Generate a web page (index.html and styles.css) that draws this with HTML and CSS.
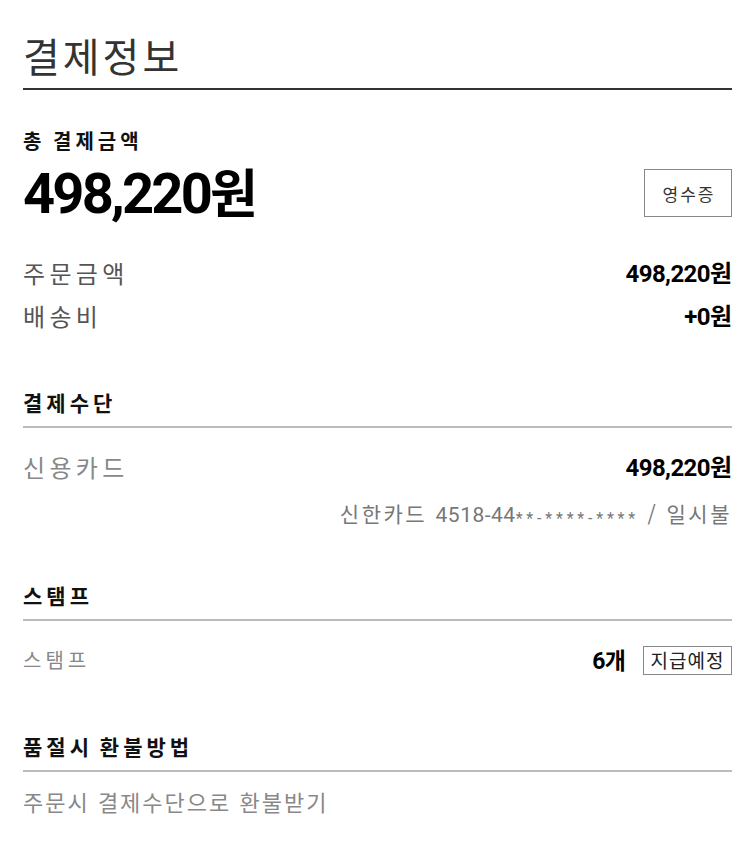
FILE: index.html
```html
<!DOCTYPE html>
<html lang="ko">
<head>
<meta charset="utf-8">
<link rel="stylesheet" href="styles.css">
</head>
<body>
<div class="page">
  <h1 class="title">결제정보</h1>

  <section class="total">
    <div class="total-label">총 결제금액</div>
    <div class="total-row">
      <div class="total-amount">498,220<span class="won">원</span></div>
      <button class="btn-receipt">영수증</button>
    </div>
  </section>

  <section class="summary">
    <div class="row">
      <span class="label">주문금액</span>
      <span class="value">498,220<span class="won">원</span></span>
    </div>
    <div class="row">
      <span class="label">배송비</span>
      <span class="value">+0<span class="won">원</span></span>
    </div>
  </section>

  <section class="block">
    <h2 class="block-title">결제수단</h2>
    <div class="row pay-row">
      <span class="label light">신용카드</span>
      <span class="value">498,220<span class="won">원</span></span>
    </div>
    <div class="card-detail">신한카드 <span class="num">4518-44</span><span class="mask">**-****-****</span> / 일시불</div>
  </section>

  <section class="block">
    <h2 class="block-title">스탬프</h2>
    <div class="row stamp-row">
      <span class="label small light">스탬프</span>
      <span class="stamp-val"><span class="value">6<span class="won">개</span></span><span class="tag">지급예정</span></span>
    </div>
  </section>

  <section class="block">
    <h2 class="block-title">품절시 환불방법</h2>
    <div class="refund">주문시 결제수단으로 환불받기</div>
  </section>
</div>
</body>
</html>
```

FILE: styles.css
```css
* { box-sizing: border-box; }
html, body { margin: 0; padding: 0; background: #fff; }
body {
  font-family: "Noto Sans CJK KR", "Noto Sans", sans-serif;
  color: #222;
}
.page {
  padding: 30px 18px 40px 23px;
}
.title {
  margin: 0;
  font-size: 40px;
  font-weight: 400;
  line-height: 50px;
  height: 60px;
  color: #333;
  padding-bottom: 8px;
  border-bottom: 2px solid #333;
  letter-spacing: 3px;
}
.total { margin-top: 38px; }
.total-label {
  font-size: 20px;
  font-weight: 700;
  line-height: 26px;
  height: 26px;
  color: #111;
  letter-spacing: 4px;
  word-spacing: -2px;
}
.total-row {
  display: flex;
  justify-content: space-between;
  align-items: flex-start;
  height: 60px;
  margin-top: 7px;
}
.total-amount {
  font-family: Roboto, "Noto Sans CJK KR", sans-serif;
  font-size: 56px;
  font-weight: 700;
  line-height: 60px;
  height: 60px;
  letter-spacing: -2.8px;
  color: #000;
}
.total-amount .won { font-family: "Noto Sans CJK KR", sans-serif; font-size: 52px; letter-spacing: 0; }
.btn-receipt {
  margin-top: 8px;
  width: 88px;
  height: 48px;
  border: 1px solid #888;
  background: #fff;
  font-family: "Noto Sans CJK KR", sans-serif;
  font-size: 17px;
  letter-spacing: 2px;
  color: #333;
  padding: 0 0 0 2px;
}
.summary { margin-top: 34px; display: flex; flex-direction: column; gap: 7px; }
.row {
  display: flex;
  justify-content: space-between;
  align-items: center;
  line-height: 36px;
  height: 36px;
}
.label { font-size: 24px; color: #555; letter-spacing: 4.3px; }
.label.light { color: #888; }
.label.small { font-size: 20px; letter-spacing: 4px; }
.value {
  font-family: Roboto, "Noto Sans CJK KR", sans-serif;
  font-size: 24px;
  font-weight: 700;
  letter-spacing: -0.6px;
  color: #000;
}
.value .won { font-family: "Noto Sans CJK KR", sans-serif; letter-spacing: 0; }
.block { margin-top: 54px; }
.block-title {
  margin: 0;
  font-size: 21px;
  font-weight: 700;
  line-height: 28px;
  color: #111;
  letter-spacing: 4px;
  word-spacing: -3px;
  padding-bottom: 10px;
  border-bottom: 2px solid #bbb;
  box-sizing: content-box;
  height: 28px;
}
.pay-row { margin-top: 21px; }
.card-detail {
  text-align: right;
  font-size: 21px;
  color: #777;
  line-height: 28px;
  height: 28px;
  letter-spacing: 2.5px;
  margin-top: 14px;
}
.card-detail .num { font-family: Roboto, sans-serif; letter-spacing: 0.5px; }
.card-detail .mask { font-family: Roboto, sans-serif; font-size: 16px; letter-spacing: 3.8px; vertical-align: -2px; }
.stamp-row { margin-top: 21px; }
.stamp-val { display: flex; align-items: center; gap: 17px; }
.stamp-val .value { font-size: 23px; }
.tag {
  display: inline-block;
  width: 89px;
  height: 29px;
  border: 1px solid #888;
  font-size: 19px;
  line-height: 26px;
  text-align: center;
  color: #222;
  letter-spacing: 1px;
  font-weight: 400;
}
.refund {
  margin-top: 14px;
  font-size: 22px;
  color: #888;
  line-height: 30px;
  height: 30px;
  letter-spacing: 2px;
}
```
